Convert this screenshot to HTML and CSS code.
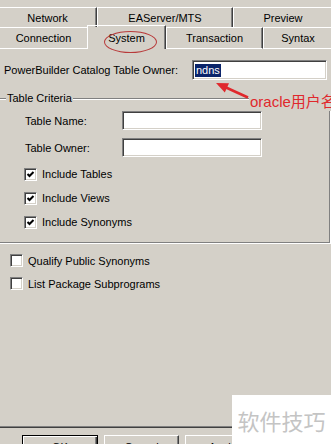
FILE: index.html
```html
<!DOCTYPE html>
<html lang="en">

<head>
    <meta charset="UTF-8">
    <meta name="viewport" content="width=device-width, initial-scale=1.0">
    <title>Database Profile Setup</title>
    <link rel="stylesheet" href="styles.css">
</head>

<body>
    <div class="dialog">
        <!-- tab strip, two rows -->
        <div class="tabs">
            <div class="tab-row back">
                <div class="tab tab-network">Network</div>
                <div class="tab tab-easerver">EAServer/MTS</div>
                <div class="tab tab-preview">Preview</div>
            </div>
            <div class="tab-row front">
                <div class="tab tab-connection">Connection</div>
                <div class="tab tab-system active">System</div>
                <div class="tab tab-transaction">Transaction</div>
                <div class="tab tab-syntax">Syntax</div>
            </div>
            <span class="circle"></span>
        </div>

        <div class="panel">
            <div class="owner-row">
                <label>PowerBuilder Catalog Table Owner:</label>
                <div class="field owner-field"><span class="sel">ndns</span></div>
            </div>

            <fieldset class="criteria">
                <legend>Table Criteria</legend>
                <div class="criteria-body">
                    <div class="field-grid">
                        <label>Table Name:</label>
                        <div class="field"></div>
                        <label>Table Owner:</label>
                        <div class="field"></div>
                    </div>
                    <div class="check"><span class="box"><svg width="13" height="13" viewBox="0 0 13 13"><polyline points="3.5,6 5.5,8 9.5,4" /></svg></span>Include Tables</div>
                    <div class="check"><span class="box"><svg width="13" height="13" viewBox="0 0 13 13"><polyline points="3.5,6 5.5,8 9.5,4" /></svg></span>Include Views</div>
                    <div class="check"><span class="box"><svg width="13" height="13" viewBox="0 0 13 13"><polyline points="3.5,6 5.5,8 9.5,4" /></svg></span>Include Synonyms</div>
                </div>
            </fieldset>

            <div class="options">
                <div class="check"><span class="box"></span>Qualify Public Synonyms</div>
                <div class="check"><span class="box"></span>List Package Subprograms</div>
            </div>
        </div>

        <div class="buttons">
            <button class="btn default">OK</button>
            <button class="btn">Cancel</button>
            <button class="btn">Apply</button>
        </div>
    </div>

    <!-- annotation drawn over the screenshot -->
    <svg class="arrow" width="331" height="444" viewBox="0 0 331 444">
        <line x1="226" y1="87.5" x2="248" y2="97.5" />
        <polygon points="216,83 224.8,92.5 229,83.3" />
    </svg>
    <div class="note">oracle用户名</div>

    <div class="watermark">软件技巧</div>
</body>

</html>
```

FILE: styles.css
```css
body {
    margin: 0;
    width: 331px;
    height: 444px;
    overflow: hidden;
    position: relative;
    background-color: #d4d0c8;
    font-family: "Liberation Sans", Arial, sans-serif;
    font-size: 11px;
    color: #000;
}

label {
    white-space: nowrap;
}

.tabs {
    position: relative;
    height: 42px;
    padding-top: 7px;
}

.tab-row {
    display: flex;
}

.tab-row.back {
    height: 20px;
}

.tab-row.front {
    height: 22px;
}

.tab {
    flex: none;
    box-sizing: border-box;
    display: flex;
    align-items: center;
    justify-content: center;
    border-top: 1px solid #fff;
    border-left: 1px solid #fff;
    border-right: 1px solid #404040;
    box-shadow: inset -1px 0 #808080;
}

.tab-network {
    width: 99px;
    margin-left: -2px;
}

.tab-easerver {
    width: 136px;
}

.tab-preview {
    width: 100px;
}

.tab-row.front .tab {
    border-bottom: 1px solid #fff;
}

.tab-row.front .tab-connection {
    width: 87px;
    border-left: none;
    border-right: none;
    box-shadow: none;
}

.tab-row.front .tab.active {
    width: 79px;
    height: 24px;
    margin-top: -2px;
    border-bottom: none;
}

.tab-transaction {
    width: 97px;
}

.tab-syntax {
    width: 70px;
}

.circle {
    position: absolute;
    left: 104px;
    top: 31px;
    width: 51px;
    height: 20px;
    border: 1px solid #b83a3a;
    border-radius: 50%;
}

.panel {
    box-sizing: border-box;
    height: 379px;
    padding-top: 11px;
    border-bottom: 1px solid #404040;
    box-shadow: inset 0 -1px #808080;
}

.owner-row {
    display: grid;
    grid-template-columns: 188px 135px;
    align-items: center;
    padding-left: 4px;
}

.field {
    box-sizing: border-box;
    height: 19px;
    background: #fff;
    border-top: 1px solid #808080;
    border-left: 1px solid #808080;
    border-right: 1px solid #fff;
    border-bottom: 1px solid #fff;
    box-shadow: inset 1px 1px #404040, inset -1px -1px #d4d0c8;
}

.owner-field {
    height: 20px;
    display: flex;
    align-items: center;
}

.sel {
    margin-left: 2px;
    padding: 0 1px;
    line-height: 13px;
    background-color: #0a246a;
    color: #fff;
}

.criteria {
    margin: 12px 1px 0 -6px;
    padding: 0 0 8px 0;
    border: 1px solid #808080;
    box-shadow: inset 1px 1px #fff, 1px 1px #fff;
    min-inline-size: 0;
}

.criteria legend {
    margin-left: 11px;
    padding: 0 1px;
    line-height: 13px;
    background-color: #d4d0c8;
}

.criteria-body {
    padding: 6px 0 0 30px;
}

.field-grid {
    display: grid;
    grid-template-columns: 97px 140px;
    row-gap: 8px;
    align-items: center;
    margin-bottom: 5px;
}

.check {
    display: flex;
    align-items: center;
    gap: 5px;
    height: 24px;
}

.criteria .check {
    margin-left: -1px;
}

.box {
    box-sizing: border-box;
    width: 13px;
    height: 13px;
    background: #fff;
    border-top: 1px solid #808080;
    border-left: 1px solid #808080;
    border-right: 1px solid #fff;
    border-bottom: 1px solid #fff;
    box-shadow: inset 1px 1px #404040, inset -1px -1px #d4d0c8;
    position: relative;
}

.box svg {
    position: absolute;
    left: -1px;
    top: -1px;
}

.box polyline {
    fill: none;
    stroke: #000;
    stroke-width: 2;
}

.options {
    margin-top: 6px;
    padding-left: 10px;
}

.options .check {
    height: 23px;
}

.buttons {
    display: flex;
    gap: 6px;
    padding: 7px 0 0 22px;
}

.btn {
    box-sizing: border-box;
    flex: none;
    width: 75px;
    height: 23px;
    padding: 0;
    font-family: inherit;
    font-size: 11px;
    color: #000;
    background-color: #d4d0c8;
    border-top: 1px solid #fff;
    border-left: 1px solid #fff;
    border-right: 1px solid #404040;
    border-bottom: 1px solid #404040;
    box-shadow: inset -1px -1px #808080;
}

.btn.default {
    width: 76px;
    border: 1px solid #000;
    box-shadow: inset 1px 1px #fff, inset -1px -1px #404040, inset -2px -2px #808080;
}

.arrow {
    position: absolute;
    left: 0;
    top: 0;
    pointer-events: none;
}

.arrow line {
    stroke: #e0282c;
    stroke-width: 2.5;
}

.arrow polygon {
    fill: #e0282c;
}

.note {
    position: absolute;
    left: 249px;
    top: 93px;
    padding-left: 1px;
    font-family: "Liberation Sans", "Noto Sans CJK SC", sans-serif;
    font-size: 15px;
    line-height: 18px;
    white-space: nowrap;
    color: #e0282c;
    background-color: #d4d0c8;
}

.watermark {
    position: absolute;
    left: 232px;
    top: 395px;
    width: 99px;
    height: 49px;
    display: flex;
    align-items: center;
    justify-content: center;
    background-color: #fff;
    font-family: "Noto Sans CJK SC", sans-serif;
    font-size: 22px;
    color: #c4c4c4;
}
```
